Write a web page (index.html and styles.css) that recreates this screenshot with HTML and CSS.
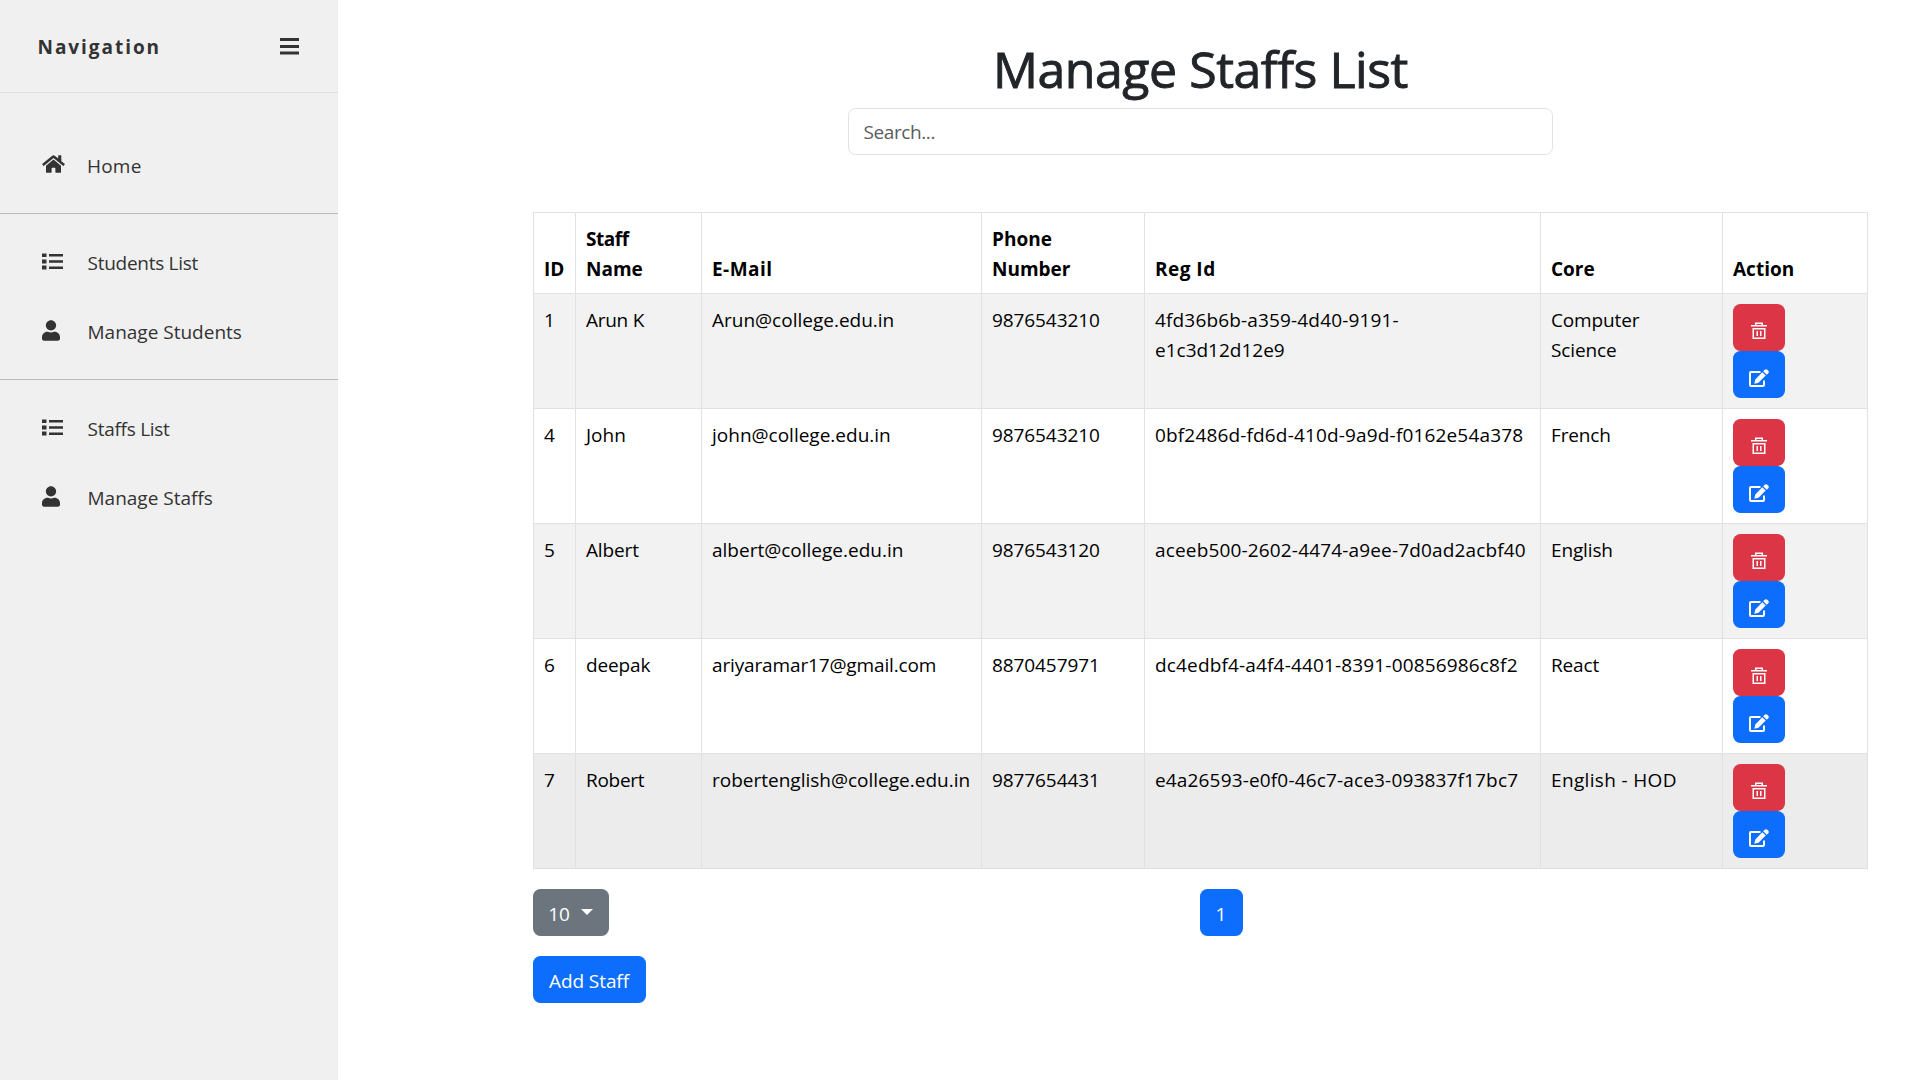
FILE: index.html
```
<!DOCTYPE html>
<html lang="en">
<head>
<meta charset="utf-8">
<title>Manage Staffs List</title>
<link rel="stylesheet" href="styles.css">
</head>
<body>
<svg class="sprite" aria-hidden="true">
  <symbol id="bars" viewBox="0 0 19 17"><path d="M0 0h19v3H0zM0 7h19v3H0zM0 13.500h19v3H0z"/></symbol>
  <symbol id="home" viewBox="0 0 576 512"><path d="M280.400 148.300 96 300.100V464a16 16 0 0 0 16 16l112.100-.3a16 16 0 0 0 15.900-16V368a16 16 0 0 1 16-16h64a16 16 0 0 1 16 16v95.600a16 16 0 0 0 16 16.100L464 480a16 16 0 0 0 16-16V300L295.700 148.300a12.200 12.200 0 0 0-15.300 0zM571.600 251.500 488 182.600V44a12 12 0 0 0-12-12h-56a12 12 0 0 0-12 12v72.600L318.500 43a48 48 0 0 0-61 0L4.300 251.500a12 12 0 0 0-1.600 16.900l25.500 31a12 12 0 0 0 16.900 1.600L280.400 107.200a12.200 12.200 0 0 1 15.300 0L531 301a12 12 0 0 0 16.900-1.600l25.500-31a12 12 0 0 0-1.800-16.900z"/></symbol>
  <symbol id="list" viewBox="0 0 21 17"><path d="M0 .5h4.500V4H0zM0 6.500h4.500v4H0zM0 12.500h4.500v4H0zM7 1h14v2.500H7zM7 7.200h14v2.500H7zM7 13.500h14V16H7z"/></symbol>
  <symbol id="user" viewBox="0 0 448 512"><path d="M224 256c70.700 0 128-57.300 128-128S294.700 0 224 0 96 57.300 96 128s57.300 128 128 128zm89.600 32h-16.700c-22.200 10.200-46.900 16-72.900 16s-50.600-5.800-72.900-16h-16.700C60.200 288 0 348.200 0 422.400V464c0 26.500 21.500 48 48 48h352c26.500 0 48-21.500 48-48v-41.600c0-74.200-60.200-134.400-134.400-134.400z"/></symbol>
  <symbol id="trash" viewBox="0 0 18 18"><path d="M5 3V.6h8V3h4v1.500H1V3zm1.500 0h5v-1h-5zM2.500 6h13v11h-13zM4 7.500v8h10v-8zM6.500 9H8v5H6.500zM10 9h1.500v5H10z" fill-rule="evenodd"/></symbol>
  <symbol id="edit" viewBox="0 0 20 18"><path d="M11.500 3H1.900q-.9 0-.9.900v12.200q0 .9.900.9h12.200q.9 0 .9-.9V11.500" fill="none" stroke="#fff" stroke-width="2"/><path d="M5.300 14.700 6.300 10.500 13.300 3.200l3.400 3.400-7.200 7.200zM14.200 2.300l1.500-1.600q1.300-1.100 2.600 0l1 1q1.100 1.300 0 2.500L17.700 5.800z"/></symbol>
</svg>
<div class="app">
  <nav class="sidebar">
    <header class="brand"><span>Navigation</span><svg class="bars"><use href="#bars"/></svg></header>
    <div class="menu first">
      <a class="item"><svg class="ic home"><use href="#home"/></svg><span class="home-label">Home</span></a>
    </div>
    <div class="menu">
      <a class="item"><svg class="ic list"><use href="#list"/></svg><span class="snug">Students List</span></a>
      <a class="item"><svg class="ic user"><use href="#user"/></svg><span>Manage Students</span></a>
    </div>
    <div class="menu">
      <a class="item"><svg class="ic list"><use href="#list"/></svg><span class="snug">Staffs List</span></a>
      <a class="item"><svg class="ic user"><use href="#user"/></svg><span>Manage Staffs</span></a>
    </div>
  </nav>
  <main class="content">
    <h1>Manage Staffs List</h1>
    <input class="search" type="text" placeholder="Search...">
    <table class="staff">
      <colgroup><col class="c-id"><col class="c-name"><col class="c-mail"><col class="c-phone"><col class="c-reg"><col class="c-core"><col class="c-act"></colgroup>
      <thead><tr><th>ID</th><th><span class="tight">Staff</span><br>Name</th><th class="wide">E-Mail</th><th>Phone<br>Number</th><th class="wide">Reg Id</th><th>Core</th><th>Action</th></tr></thead>
      <tbody>
        <tr><td>1</td><td class="snug">Arun K</td><td>Arun@college.edu.in</td><td class="num">9876543210</td><td><span class="uuid">4fd36b6b-a359-4d40-9191-</span><br>e1c3d12d12e9</td><td class="near">Computer<br>Science</td><td><button class="btn red"><svg><use href="#trash"/></svg></button><button class="btn blue"><svg class="pen"><use href="#edit"/></svg></button></td></tr>
        <tr><td>4</td><td>John</td><td>john@college.edu.in</td><td class="num">9876543210</td><td class="uuid">0bf2486d-fd6d-410d-9a9d-f0162e54a378</td><td class="near">French</td><td><button class="btn red"><svg><use href="#trash"/></svg></button><button class="btn blue"><svg class="pen"><use href="#edit"/></svg></button></td></tr>
        <tr><td>5</td><td class="near">Albert</td><td>albert@college.edu.in</td><td class="num">9876543120</td><td class="uuid">aceeb500-2602-4474-a9ee-7d0ad2acbf40</td><td class="near">English</td><td><button class="btn red"><svg><use href="#trash"/></svg></button><button class="btn blue"><svg class="pen"><use href="#edit"/></svg></button></td></tr>
        <tr><td>6</td><td class="near">deepak</td><td class="near">ariyaramar17@gmail.com</td><td class="num">8870457971</td><td class="uuid">dc4edbf4-a4f4-4401-8391-00856986c8f2</td><td class="near">React</td><td><button class="btn red"><svg><use href="#trash"/></svg></button><button class="btn blue"><svg class="pen"><use href="#edit"/></svg></button></td></tr>
        <tr class="hovered"><td>7</td><td class="snug">Robert</td><td>robertenglish@college.edu.in</td><td class="num">9877654431</td><td class="uuid">e4a26593-e0f0-46c7-ace3-093837f17bc7</td><td class="loose">English - HOD</td><td><button class="btn red"><svg><use href="#trash"/></svg></button><button class="btn blue"><svg class="pen"><use href="#edit"/></svg></button></td></tr>
      </tbody>
    </table>
    <div class="pager">
      <div class="half"><button class="btn gray">10<i class="caret"></i></button></div>
      <div class="half"><button class="btn blue page">1</button></div>
    </div>
    <button class="btn blue add">Add Staff</button>
  </main>
</div>
</body>
</html>
```
FILE: styles.css
```
*{box-sizing:border-box}
body{margin:0;font:19px/30px "Open Sans","Noto Sans",sans-serif;color:#212529;background:#fff}
.sprite{display:none}
.app{display:flex;height:1080px;overflow:hidden}
.sidebar{width:338px;flex:none;background:#f0f0f0;color:#333}
.brand{display:flex;justify-content:space-between;align-items:flex-start;height:93px;padding:32px 39px 0 37.500px;border-bottom:1px solid #e0e0e0;font-weight:700;letter-spacing:1.950px}
.bars{width:19px;height:17px;margin-top:6px;fill:#333}
.menu{padding:14px 0 13px;border-top:1px solid #bbb}
.menu.first{padding-top:38px;border-top:0}
.item{display:flex;align-items:flex-start;height:69px;padding:20px 0 0 42px}
.ic{fill:#333;flex:none}
.home{width:23px;height:20px;margin:3px 22px 0 0}
.list{width:21px;height:17px;margin:5px 24.500px 0 0}
.user{width:18px;height:21px;margin:3px 27.500px 0 0}
.home-label{letter-spacing:.2px}
.snug{letter-spacing:-.27px}
.near{letter-spacing:-.14px}
.tight{letter-spacing:-.45px}
.wide{letter-spacing:.48px}
.loose{letter-spacing:.34px}
.num{letter-spacing:-.09px}
.uuid{letter-spacing:.16px}
.content{width:1335px;margin-left:195px;padding-top:39px}
h1{margin:0;height:69px;font-size:50px;line-height:60px;font-weight:500;letter-spacing:-.46px;text-align:center;-webkit-text-stroke:.9px #212529}
.search{display:block;width:705px;height:47px;margin:0 auto 57px;padding:0 15px 0 14.500px;border:1px solid #dee2e6;border-radius:7.500px;font:inherit;letter-spacing:-.4px}
.search::placeholder{color:#595c5f;opacity:1}
.staff{width:1335px;border-collapse:collapse;table-layout:fixed;color:#000}
.c-id{width:42px}.c-name{width:126px}.c-mail{width:280px}.c-phone{width:163px}.c-reg{width:396px}.c-core{width:182px}.c-act{width:145px}
th,td{border:1px solid #dee2e6;padding:11px 10px 9px;text-align:left;white-space:nowrap}
th{height:81px;vertical-align:bottom;font-weight:700}
td{height:115px;vertical-align:top}
td:last-child{padding-top:10px;padding-bottom:10px}
tbody tr:nth-child(odd){background:#f2f2f2}
tbody tr.hovered{background:#ececec}
.btn{display:flex;align-items:center;justify-content:center;height:47px;padding:2px 16px 0 15px;border:0;border-radius:7.500px;color:#fff;font:inherit;letter-spacing:-.08px}
td .btn{width:52px;padding:7px 0 0}
.btn svg{width:18px;height:18px;fill:#fff}
.btn svg.pen{width:20px}
.red{background:#dc3545}
.blue{background:#0d6efd}
.gray{width:76px;background:#6c757d}
.caret{margin:-4px 0 0 11px;border:6px solid transparent;border-top-color:#fff;border-bottom:0}
.pager{display:flex;margin-top:20px}
.half{width:50%}
.half:first-child{width:667px}
.page{width:43px}
.add{width:113px;margin-top:20px}
```
